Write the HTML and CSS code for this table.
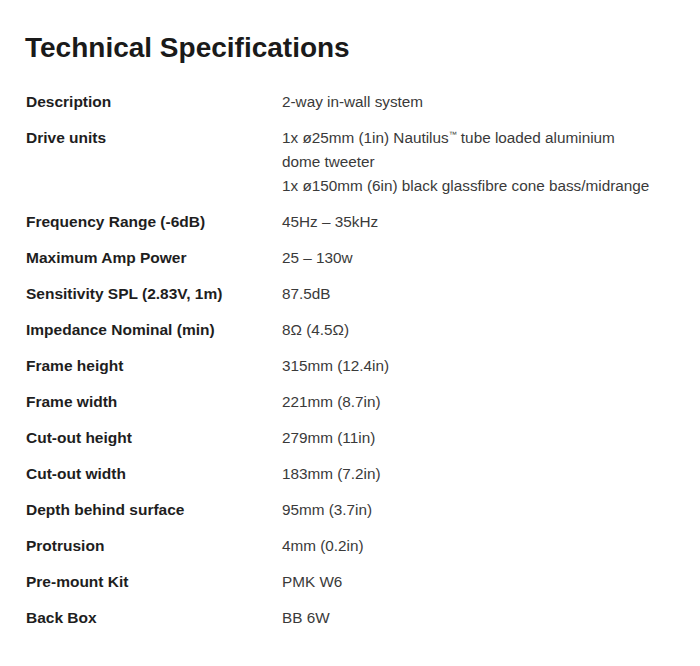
FILE: index.html
```html
<!DOCTYPE html>
<html>
<head>
<meta charset="utf-8">
<link rel="stylesheet" href="styles.css">
</head>
<body>
<div class="page">
  <h1 class="title">Technical Specifications</h1>
  <dl class="specs">
    <div class="row"><dt>Description</dt><dd>2-way in-wall system</dd></div>
    <div class="row"><dt>Drive units</dt><dd>1x ø25mm (1in) Nautilus<sup class="tm">™</sup> tube loaded aluminium<br>dome tweeter<br>1x ø150mm (6in) black glassfibre cone bass/midrange</dd></div>
    <div class="row"><dt>Frequency Range (-6dB)</dt><dd>45Hz – 35kHz</dd></div>
    <div class="row"><dt>Maximum Amp Power</dt><dd>25 – 130w</dd></div>
    <div class="row"><dt>Sensitivity SPL (2.83V, 1m)</dt><dd>87.5dB</dd></div>
    <div class="row"><dt>Impedance Nominal (min)</dt><dd>8Ω (4.5Ω)</dd></div>
    <div class="row"><dt>Frame height</dt><dd>315mm (12.4in)</dd></div>
    <div class="row"><dt>Frame width</dt><dd>221mm (8.7in)</dd></div>
    <div class="row"><dt>Cut-out height</dt><dd>279mm (11in)</dd></div>
    <div class="row"><dt>Cut-out width</dt><dd>183mm (7.2in)</dd></div>
    <div class="row"><dt>Depth behind surface</dt><dd>95mm (3.7in)</dd></div>
    <div class="row"><dt>Protrusion</dt><dd>4mm (0.2in)</dd></div>
    <div class="row"><dt>Pre-mount Kit</dt><dd>PMK W6</dd></div>
    <div class="row"><dt>Back Box</dt><dd>BB 6W</dd></div>
  </dl>
</div>
</body>
</html>
```

FILE: styles.css
```css
html, body {
  margin: 0;
  padding: 0;
  background: #fff;
}
.page {
  padding: 31px 25px 0 25px;
  font-family: "Liberation Sans", Arial, sans-serif;
}
.title {
  margin: 0 0 25px 0;
  font-size: 28px;
  line-height: 34px;
  font-weight: bold;
  color: #1a1a1a;
}
.specs {
  margin: 0;
  display: flex;
  flex-direction: column;
  gap: 12px;
}
.row {
  display: grid;
  grid-template-columns: 257px 1fr;
}
.row dt {
  font-size: 15.5px;
  line-height: 24px;
  font-weight: bold;
  color: #1e1e1e;
  padding-left: 1px;
}
.row dd {
  margin: 0;
  font-size: 15.3px;
  line-height: 24px;
  color: #3a3a3a;
}
.tm {
  font-size: 8px;
  line-height: 0;
  vertical-align: 6px;
}
```
